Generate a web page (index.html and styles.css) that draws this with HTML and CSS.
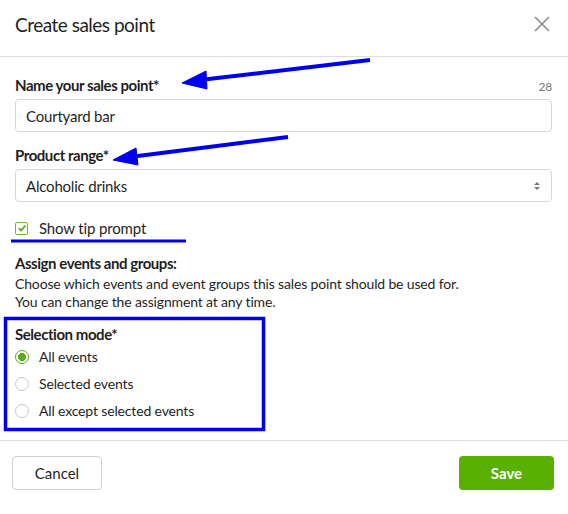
FILE: index.html
```html
<!DOCTYPE html>
<html lang="en">
<head>
  <meta charset="UTF-8">
  <title>Create sales point</title>
  <link rel="stylesheet" href="styles.css">
</head>
<body>

  <div class="modal">
    <div class="modal-header">
      <h2>Create sales point</h2>
      <span class="close">
        <svg width="16" height="16" viewBox="0 0 16 16"><path d="M1 1L15 15M15 1L1 15" stroke="#8a8a8a" stroke-width="1.6"/></svg>
      </span>
    </div>

    <div class="modal-body">
      <div class="field">
        <div class="label-row">
          <label for="nome">Name your sales point*</label>
          <span class="counter">28</span>
        </div>
        <input id="nome" type="text" value="Courtyard bar">
      </div>

      <div class="field second">
        <label for="range">Product range*</label>
        <div class="select">
          <span>Alcoholic drinks</span>
          <svg width="8" height="12" viewBox="0 0 8 12"><path d="M1 5L4 2L7 5Z M1 7L4 10L7 7Z" fill="#777"/></svg>
        </div>
      </div>

      <div class="check-row">
        <span class="checkbox">
          <svg width="10" height="10" viewBox="0 0 10 10"><path d="M1.8 5.2L4 7.4L8.4 2.6" fill="none" stroke="#5aae16" stroke-width="1.8"/></svg>
        </span>
        Show tip prompt
      </div>

      <div class="assign">
        <h3>Assign events and groups:</h3>
        <p>Choose which events and event groups this sales point should be used for.<br>You can change the assignment at any time.</p>
      </div>

      <div class="mode">
        <h3>Selection mode*</h3>
        <div class="radio-row"><span class="radio checked"></span>All events</div>
        <div class="radio-row"><span class="radio"></span>Selected events</div>
        <div class="radio-row"><span class="radio"></span>All except selected events</div>
      </div>
    </div>

    <div class="modal-footer">
      <button class="btn-cancel">Cancel</button>
      <button class="btn-save">Save</button>
    </div>
  </div>

  <!-- annotations drawn on top of the screenshot -->
  <svg class="marks" width="568" height="514" viewBox="0 0 568 514">
    <g fill="#0000f0" stroke="#0000f0">
      <line x1="370" y1="60" x2="200" y2="80" stroke-width="4"/>
      <path d="M182 83L206 71L207 89Z" stroke-width="1"/>
      <line x1="288" y1="137" x2="130" y2="157" stroke-width="4"/>
      <path d="M113 160L136 148L138 165Z" stroke-width="1"/>
      <line x1="11" y1="241" x2="186" y2="241" stroke-width="3"/>
    </g>
    <rect x="5.5" y="318.5" width="258" height="111" fill="none" stroke="#0000f0" stroke-width="3.5"/>
  </svg>

</body>
</html>
```

FILE: styles.css
```css
body {
  margin: 0;
  font-family: Lato, "Noto Sans", sans-serif;
  color: #1f1f1f;
  background-color: #fff;
  letter-spacing: -0.15px;
}
.modal {
  width: 568px;
  height: 514px;
  display: flex;
  flex-direction: column;
}
.modal-header {
  box-sizing: border-box;
  height: 57px;
  border-bottom: 1px solid #dedede;
  display: flex;
  align-items: center;
  justify-content: space-between;
  padding: 0 18px 8px 15px;
}
.modal-header h2 {
  margin: 0;
  font-size: 19px;
  font-weight: normal;
  letter-spacing: -0.5px;
}
.close {
  display: flex;
}
.modal-body {
  padding: 0 16px 0 15px;
  height: 383px;
  border-bottom: 1px solid #dedede;
}
.field {
  margin-top: 19px;
}
.field.second {
  margin-top: 14px;
}
.label-row {
  display: flex;
  justify-content: space-between;
  align-items: flex-end;
}
label, h3 {
  display: block;
  font-size: 15px;
  font-weight: bold;
  margin: 0;
  letter-spacing: -0.45px;
}
.counter {
  font-size: 12px;
  color: #777;
}
input, .select {
  box-sizing: border-box;
  width: 100%;
  height: 33px;
  margin-top: 5px;
  border: 1px solid #d8d8d8;
  border-radius: 4px;
  padding: 0 10px;
  font-family: inherit;
  font-size: 15px;
  letter-spacing: -0.2px;
  color: #1f1f1f;
}
.select {
  display: flex;
  align-items: center;
  justify-content: space-between;
}
.check-row {
  display: flex;
  align-items: center;
  gap: 11px;
  font-size: 15px;
  height: 18px;
  margin-top: 17px;
}
.checkbox {
  box-sizing: border-box;
  width: 13px;
  height: 13px;
  border: 1px solid #6bbb2a;
  border-radius: 2px;
  display: flex;
  align-items: center;
  justify-content: center;
}
.assign {
  margin-top: 17px;
}
.assign h3, .mode h3 {
  line-height: 18px;
}
.assign p {
  margin: 3px 0 0;
  font-size: 14px;
  line-height: 18px;
}
.mode {
  margin-top: 14px;
}
.radio-row {
  display: flex;
  align-items: center;
  gap: 10px;
  font-size: 14px;
  height: 27px;
}
.radio {
  box-sizing: border-box;
  width: 14px;
  height: 14px;
  border: 1px solid #c8c8c8;
  border-radius: 50%;
}
.radio.checked {
  border-color: #5aae16;
  background: radial-gradient(circle, #5aae16 0 3.8px, #fff 4.3px);
}
.modal-footer {
  display: flex;
  justify-content: space-between;
  padding: 15px 14px 0 12px;
}
button {
  height: 34px;
  font-family: inherit;
  font-size: 15px;
  border-radius: 4px;
  cursor: pointer;
}
.btn-cancel {
  width: 90px;
  background-color: #fff;
  border: 1px solid #d0d0d0;
  color: #1f1f1f;
}
.btn-save {
  width: 95px;
  background-color: #5ab000;
  border: none;
  color: #fff;
  font-weight: bold;
}
.marks {
  position: absolute;
  top: 0;
  left: 0;
  pointer-events: none;
}
```
